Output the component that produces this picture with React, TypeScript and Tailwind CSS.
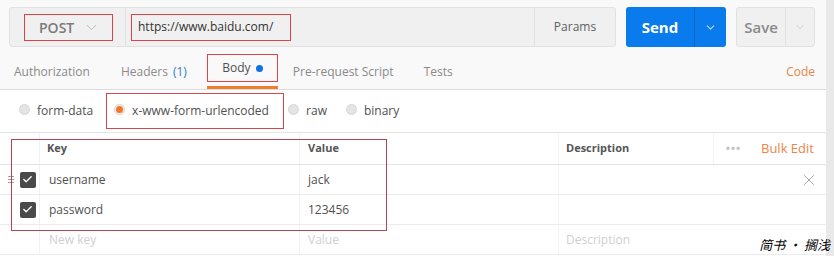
import { Check, ChevronDown, X } from "lucide-react";

const font = { fontFamily: '"Open Sans", "Noto Sans CJK SC", sans-serif' };

function Radio({ label, on }: { label: string; on?: boolean }) {
  return (
    <div className="flex items-center gap-[7px]">
      <span
        className={`h-[11px] w-[11px] rounded-full border ${
          on ? "border-[#e0d0c8] bg-[#f0f0f0]" : "border-[#d6d6d6] bg-[#e4e4e4]"
        } flex items-center justify-center -mt-[4px]`}
      >
        {on && <span className="h-[7px] w-[7px] rounded-full bg-[#f0782d]" />}
      </span>
      <span className="text-[12px] text-[#505050]">{label}</span>
    </div>
  );
}

function Box() {
  return (
    <span className="flex h-[16px] w-[16px] items-center justify-center rounded-[2px] bg-[#4a4a4a]">
      <Check className="h-[11px] w-[11px] text-white" strokeWidth={3} />
    </span>
  );
}

function Row({
  k,
  v,
  handle,
  close,
  placeholder,
}: {
  k: string;
  v: string;
  handle?: boolean;
  close?: boolean;
  placeholder?: boolean;
}) {
  const txt = placeholder ? "text-[#d0d0d0]" : "text-[#505050]";
  return (
    <div className="flex h-[30px] border-b border-[#ececec] text-[12px]">
      <div className="relative flex w-[40px] items-center justify-center border-r border-[#f2f2f2] pl-[16px]">
        {handle && (
          <span className="absolute left-[8px] top-[11px] flex flex-col gap-[2px]">
            <span className="h-[1px] w-[6px] bg-[#a0a0a0]" />
            <span className="h-[1px] w-[6px] bg-[#a0a0a0]" />
            <span className="h-[1px] w-[6px] bg-[#a0a0a0]" />
          </span>
        )}
        {!placeholder && <Box />}
      </div>
      <div className={`flex w-[260px] items-center border-r border-[#f2f2f2] pl-[9px] ${txt}`}>{k}</div>
      <div className={`flex w-[259px] items-center border-r border-[#f2f2f2] pl-[8px] ${txt}`}>{v}</div>
      <div className={`flex flex-1 items-center justify-between pl-[7px] pr-[8px] ${txt}`}>
        <span>{placeholder ? "Description" : ""}</span>
        {close && <X className="h-[18px] w-[18px] text-[#a8a8a8]" strokeWidth={1.3} />}
      </div>
    </div>
  );
}

export default function App() {
  return (
    <div className="relative h-[256px] w-[834px] overflow-hidden bg-white" style={font}>
      <div className="flex">
        <div className="w-[826px]">
          {/* request bar + tabs */}
          <div className="bg-[#f9f9f9]">
            <div className="flex items-stretch pl-[9px] pt-[7px]">
              <div className="flex h-[40px] w-[607px] rounded-[3px] border border-[#e2e2e2] bg-[#f0f0f0]">
                <div className="flex w-[116px] items-center border-r border-[#e2e2e2] pl-[14px]">
                  <div className="flex h-[27px] w-[89px] items-center gap-[9px] border border-[#d9454a] pl-[14px]">
                    <span className="text-[14px] font-semibold text-[#7a7a7a]">POST</span>
                    <ChevronDown className="h-[17px] w-[17px] text-[#b5b5b5]" strokeWidth={1.3} />
                  </div>
                </div>
                <div className="flex flex-1 items-center pl-[5px]">
                  <div className="flex h-[27px] w-[160px] items-center border border-[#d9454a] pl-[6px] text-[12px] text-[#333]">
                    https://www.baidu.com/
                  </div>
                </div>
                <div className="flex w-[81px] items-center justify-center border-l border-[#e2e2e2] text-[12px] text-[#606060]">
                  Params
                </div>
              </div>
              <div className="ml-[10px] flex h-[40px] w-[100px] rounded-[3px] bg-[#097bed]">
                <div className="flex w-[69px] items-center justify-center border-r border-[#0a68c9] text-[15px] font-bold text-white">
                  Send
                </div>
                <div className="flex flex-1 items-center justify-center">
                  <ChevronDown className="h-[13px] w-[13px] text-[#b9d8f8]" strokeWidth={2} />
                </div>
              </div>
              <div className="ml-[10px] flex h-[40px] w-[79px] rounded-[3px] border border-[#e2e2e2] bg-[#f0f0f0]">
                <div className="flex w-[49px] items-center justify-center border-r border-[#e2e2e2] text-[15px] font-semibold text-[#8a8a8a]">
                  Save
                </div>
                <div className="flex flex-1 items-center justify-center">
                  <ChevronDown className="h-[12px] w-[12px] text-[#c0c0c0]" strokeWidth={1.5} />
                </div>
              </div>
            </div>

            <div className="mt-[7px] flex h-[36px] items-stretch border-b border-[#dcdcdc] text-[12px] text-[#8a8a8a]">
              <div className="flex items-center pl-[14px] pr-[31px]">Authorization</div>
              <div className="flex items-center pr-[20px]">
                Headers<span className="ml-[5px] text-[#2a7dd4]">(1)</span>
              </div>
              <div className="relative flex w-[71px] flex-col">
                <div className="flex h-[28px] items-center justify-center gap-[5px] border border-[#d9454a] text-[#505050]">
                  Body
                  <span className="h-[7px] w-[7px] rounded-full bg-[#0c72e6]" />
                </div>
                <div className="mt-auto h-[3px] bg-[#ef7e2f]" />
              </div>
              <div className="flex items-center pl-[15px] pr-[30px]">Pre-request Script</div>
              <div className="flex items-center">Tests</div>
              <div className="ml-auto flex items-center pr-[11px] text-[12px] text-[#ec8448]">Code</div>
            </div>
          </div>

          {/* body types */}
          <div className="flex h-[42px] items-center pl-[19px]">
            <Radio label="form-data" />
            <div className="ml-[13px] flex h-[36px] w-[178px] items-center border border-[#d9454a] pl-[7px]">
              <Radio label="x-www-form-urlencoded" on />
            </div>
            <div className="ml-[4px]">
              <Radio label="raw" />
            </div>
            <div className="ml-[19px]">
              <Radio label="binary" />
            </div>
          </div>

          {/* key/value table */}
          <div className="relative border-t border-[#e4e4e4]">
            <div className="flex h-[32px] border-b border-[#e4e4e4] text-[11px] font-bold text-[#555]">
              <div className="w-[40px] border-r border-[#f2f2f2]" />
              <div className="flex w-[260px] items-center border-r border-[#f2f2f2] pl-[7px]">Key</div>
              <div className="flex w-[259px] items-center border-r border-[#f2f2f2] pl-[8px]">Value</div>
              <div className="flex flex-1 items-center pl-[7px]">Description</div>
              <div className="flex w-[40px] items-center justify-center border-l border-[#f2f2f2] text-[11px] tracking-[1px] text-[#c4c4c4]">
                •••
              </div>
              <div className="flex w-[73px] items-center pl-[8px] text-[13px] font-normal text-[#ec8448]">
                Bulk Edit
              </div>
            </div>
            <Row k="username" v="jack" handle close />
            <Row k="password" v="123456" />
            <Row k="New key" v="Value" placeholder />

            <div className="pointer-events-none absolute left-[11px] top-[6px] h-[92px] w-[376px] border border-[#b4444f]" />
          </div>
        </div>
        <div className="h-[256px] w-[8px] bg-[#e9e9e9]" />
      </div>

      <div
        className="absolute bottom-[2px] right-[4px] text-[13px] italic text-black"
        style={{ fontFamily: '"Noto Sans CJK SC", sans-serif' }}
      >
        简书 • 搁浅
      </div>
    </div>
  );
}
